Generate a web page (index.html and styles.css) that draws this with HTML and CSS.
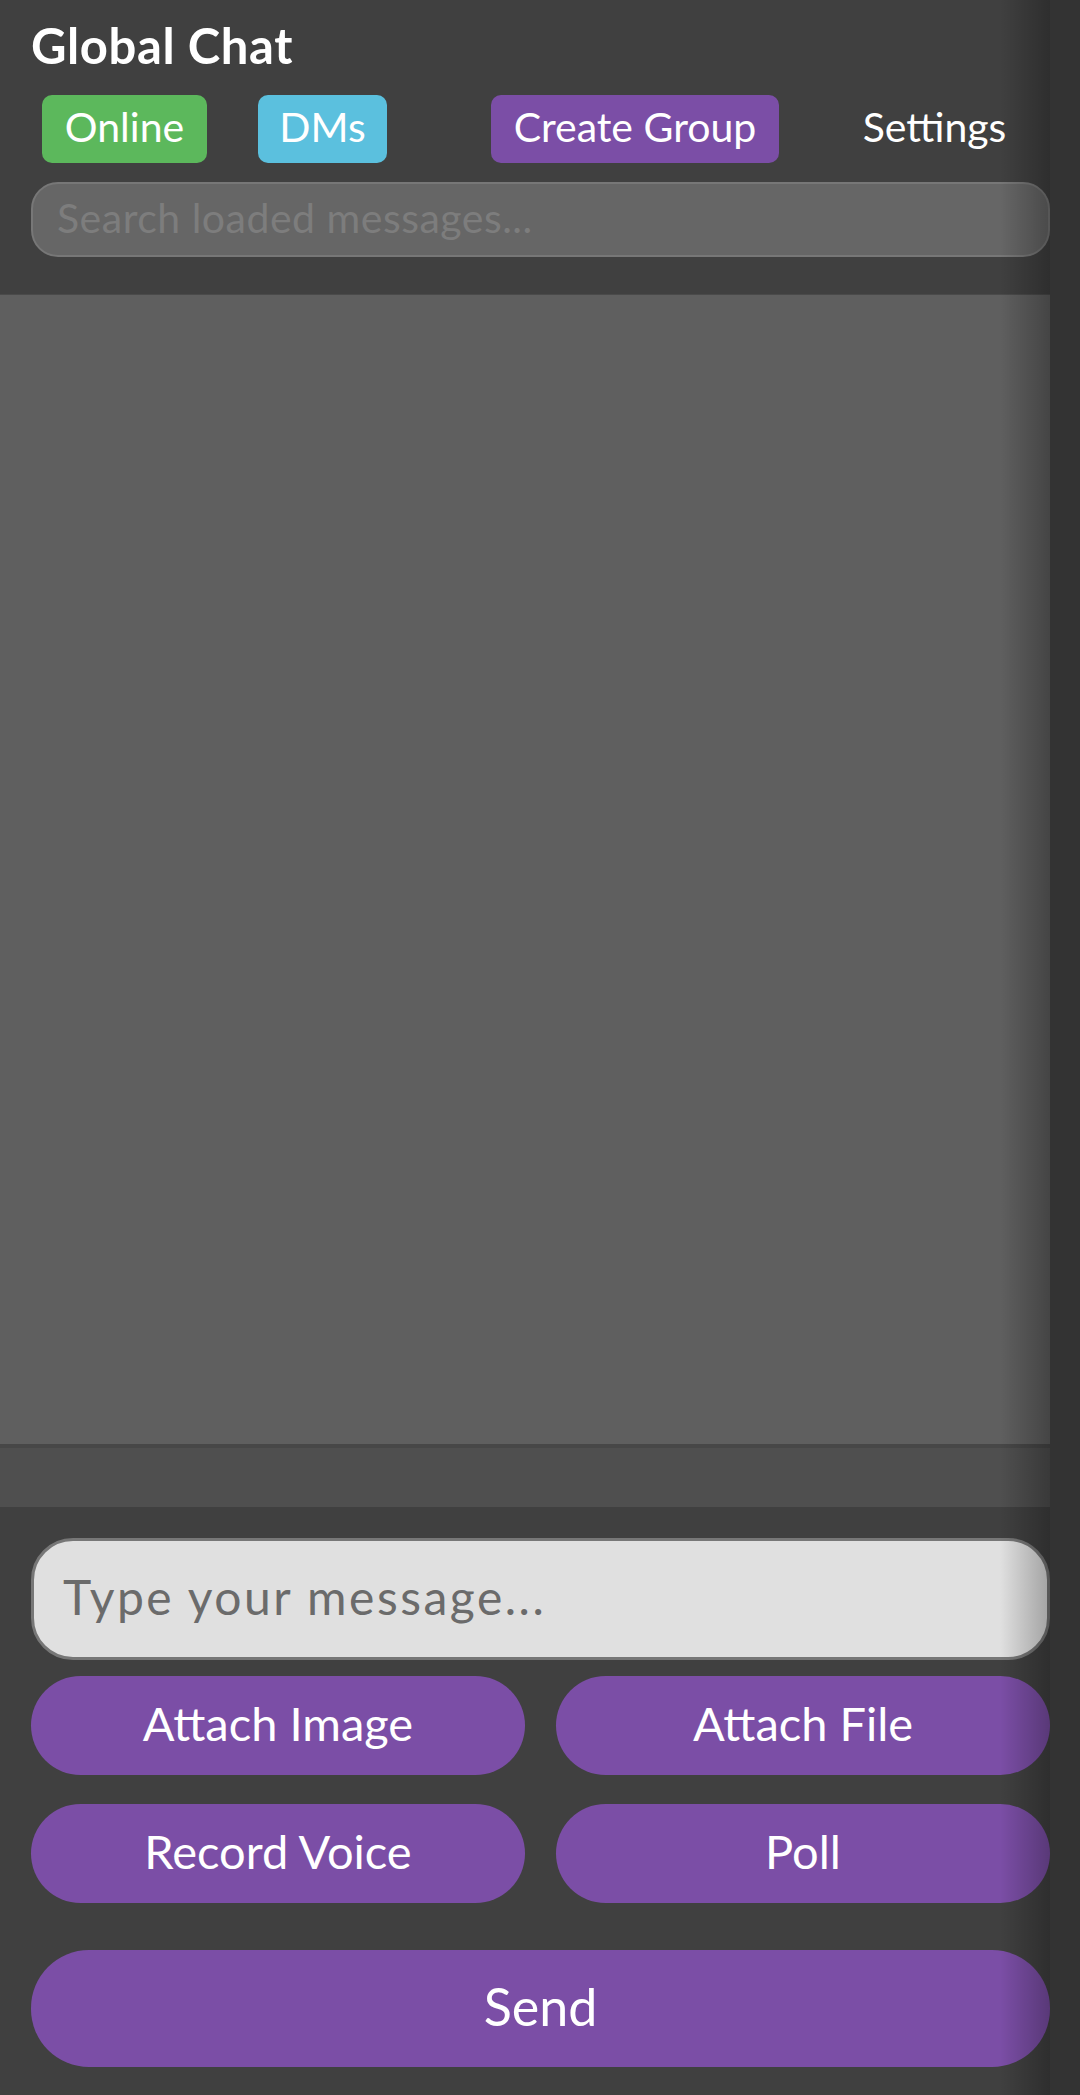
FILE: index.html
```html
<!DOCTYPE html>
<html lang="en">
<head>
<meta charset="utf-8">
<title>Global Chat</title>
<link rel="stylesheet" href="styles.css">
</head>
<body>
<div class="app">
  <header class="header">
    <h1 class="title">Global Chat</h1>
    <nav class="nav">
      <button class="nav-btn nav-online">Online</button>
      <button class="nav-btn nav-dms">DMs</button>
      <button class="nav-btn nav-group">Create Group</button>
      <button class="nav-btn nav-settings">Settings</button>
    </nav>
    <input class="search" type="text" placeholder="Search loaded messages...">
  </header>
  <main class="messages"></main>
  <div class="typing-bar"></div>
  <footer class="composer">
    <input class="msg-input" type="text" placeholder="Type your message...">
    <div class="actions">
      <button class="pill">Attach Image</button>
      <button class="pill">Attach File</button>
      <button class="pill">Record Voice</button>
      <button class="pill">Poll</button>
    </div>
    <button class="pill send">Send</button>
  </footer>
  <div class="edge-shadow"></div>
</div>
</body>
</html>
```
FILE: styles.css
```css
* { box-sizing: border-box; }
html, body { margin: 0; padding: 0; }
body {
  background: #333333;
  font-family: Lato, "Open Sans", sans-serif;
  color: #ffffff;
}
.app {
  position: relative;
  width: 1050px;
  height: 2095px;
  display: flex;
  flex-direction: column;
  background: #404040;
}
.header {
  background: #404040;
  padding: 22px 0 0 31px;
  height: 294px;
  flex: none;
}
.title {
  margin: 0;
  font-size: 49px;
  line-height: 46px;
  letter-spacing: 0.6px;
  font-weight: 700;
  color: #ffffff;
}
.nav {
  display: flex;
  align-items: center;
  margin-top: 27px;
  padding-left: 11px;
  height: 68px;
}
.nav-btn {
  flex: none;
  font-family: inherit;
  font-size: 41px;
  line-height: 50px;
  white-space: nowrap;
  text-align: center;
  color: #ffffff;
  border: none;
  border-radius: 10px;
  padding: 0 0 5px 0;
  height: 68px;
  background: transparent;
}
.nav-online { background: #5cb85c; width: 165px; }
.nav-dms { background: #5bc0de; width: 129px; margin-left: 51px; }
.nav-group { background: #7b4ea6; width: 288px; margin-left: 104px; }
.nav-settings { width: 193px; margin-left: 59px; }
.search {
  display: block;
  margin-top: 19px;
  width: 100%;
  height: 75px;
  border: 2px solid #777777;
  border-radius: 27px;
  background: #666666;
  padding: 0 24px 5px 24px;
  font-family: inherit;
  font-size: 41px;
  letter-spacing: 0.5px;
  color: #dddddd;
}
.search::placeholder { color: #7d7d7d; }
.messages {
  height: 1154px;
  flex: none;
  background: #5f5f5f;
  border-top: 1px solid #4a4a4a;
  border-bottom: 4px solid #474747;
}
.typing-bar {
  height: 59px;
  flex: none;
  background: #4f4f4f;
}
.composer {
  flex: 1;
  background: #404040;
  padding: 31px 0 0 31px;
}
.msg-input {
  display: block;
  width: 100%;
  height: 122px;
  border: 3px solid #777777;
  border-radius: 42px;
  background: #e0e0e0;
  padding: 0 29px 5px 29px;
  font-family: inherit;
  font-size: 48px;
  letter-spacing: 2.5px;
  color: #333333;
}
.msg-input::placeholder { color: #6b6b6b; }
.actions {
  display: grid;
  grid-template-columns: 1fr 1fr;
  column-gap: 31px;
  row-gap: 29px;
  margin-top: 16px;
}
.pill {
  font-family: inherit;
  font-size: 47px;
  color: #ffffff;
  background: #7b4ea6;
  border: none;
  border-radius: 50px;
  height: 99px;
  padding: 0 0 6px 0;
}
.send {
  display: block;
  width: 100%;
  height: 117px;
  margin-top: 47px;
  border-radius: 58px;
  font-size: 52px;
}
.edge-shadow {
  position: absolute;
  top: 0;
  right: 0;
  width: 50px;
  height: 100%;
  background: linear-gradient(to right, rgba(0,0,0,0), rgba(0,0,0,0.28));
  pointer-events: none;
}
```
